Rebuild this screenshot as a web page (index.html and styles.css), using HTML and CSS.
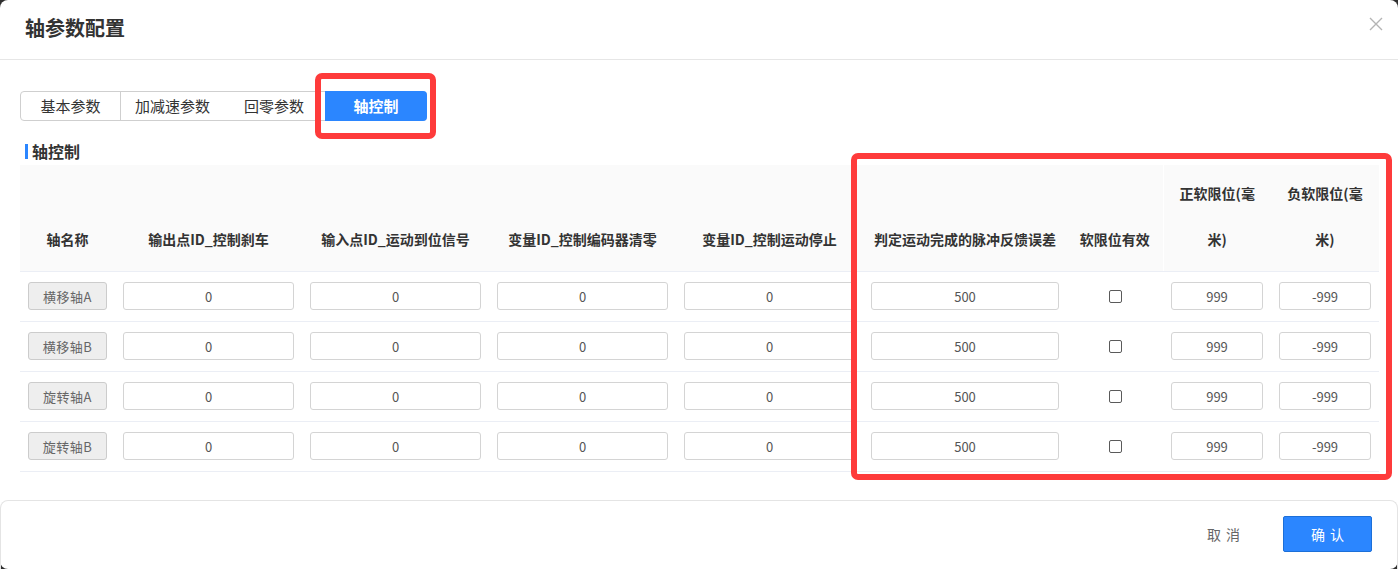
FILE: index.html
```html
<!DOCTYPE html>
<html lang="zh-CN">
<head>
    <meta charset="UTF-8">
    <title>轴参数配置</title>
    <link rel="stylesheet" href="styles.css">
</head>
<body>
    <div class="modal">
        <div class="modal-header">
            <h1 class="modal-title">轴参数配置</h1>
            <span class="modal-close">
                <svg width="14" height="14" viewBox="0 0 14 14"><path d="M1 1L13 13M13 1L1 13" stroke="#b4b4b4" stroke-width="1.4" fill="none"/></svg>
            </span>
        </div>

        <div class="modal-body">
            <div class="tabs">
                <div class="tab tab-first">基本参数</div>
                <div class="tab">加减速参数</div>
                <div class="tab">回零参数</div>
                <div class="tab active">轴控制</div>
            </div>

            <div class="section-title">轴控制</div>

            <table class="axis-table">
                <colgroup>
                    <col style="width:95px">
                    <col style="width:187px">
                    <col style="width:187px">
                    <col style="width:187px">
                    <col style="width:187px">
                    <col style="width:204px">
                    <col style="width:96px">
                    <col style="width:108px">
                    <col style="width:108px">
                </colgroup>
                <thead>
                    <tr>
                        <th>轴名称</th>
                        <th>输出点ID_控制刹车</th>
                        <th>输入点ID_运动到位信号</th>
                        <th>变量ID_控制编码器清零</th>
                        <th>变量ID_控制运动停止</th>
                        <th>判定运动完成的脉冲反馈误差</th>
                        <th>软限位有效</th>
                        <th class="th-split">正软限位(毫<br>米)</th>
                        <th>负软限位(毫<br>米)</th>
                    </tr>
                </thead>
                <tbody id="rows"></tbody>
            </table>
        </div>

        <div class="modal-footer">
            <button class="btn btn-cancel">取消</button>
            <button class="btn btn-primary">确认</button>
        </div>

        <!-- annotation boxes -->
        <div class="mark mark-tab"></div>
        <div class="mark mark-table"></div>
    </div>

    <script>
        const axes = ['横移轴A', '横移轴B', '旋转轴A', '旋转轴B'];
        const tbody = document.getElementById('rows');

        axes.forEach(name => {
            const tr = document.createElement('tr');
            tr.innerHTML = `
                <td><button class="axis-name">${name}</button></td>
                <td><input class="cell-input" value="0"></td>
                <td><input class="cell-input" value="0"></td>
                <td><input class="cell-input" value="0"></td>
                <td><input class="cell-input" value="0"></td>
                <td><input class="cell-input" value="500"></td>
                <td class="center"><input type="checkbox" class="check"></td>
                <td><input class="cell-input" value="999"></td>
                <td><input class="cell-input" value="-999"></td>`;
            tbody.appendChild(tr);
        });
    </script>
</body>
</html>
```

FILE: styles.css
```css
* {
    margin: 0;
    padding: 0;
    box-sizing: border-box;
}

html, body {
    height: 100%;
}

body {
    font-family: "Noto Sans CJK SC", "Noto Sans", sans-serif;
    background-color: #2f2f2f;
    color: #333;
    overflow: hidden;
}

.modal {
    position: relative;
    height: 569px;
    background-color: #fff;
    border-radius: 8px;
    display: flex;
    flex-direction: column;
}

.modal-header {
    height: 60px;
    border-bottom: 1px solid #e6e6e6;
    padding: 0 15px 0 25px;
    display: flex;
    align-items: center;
    justify-content: space-between;
}

.modal-title {
    font-size: 20px;
    font-weight: bold;
    color: #333;
    line-height: 24px;
    margin-top: -3px;
}

.modal-close {
    display: flex;
    margin-top: -12px;
}

.modal-body {
    flex: 1;
    padding: 31px 0 0 20px;
}

/* tabs */
.tabs {
    display: inline-flex;
    height: 30px;
    border: 1px solid #cfcfcf;
    border-radius: 4px;
}

.tab {
    min-width: 100px;
    padding: 0 14px;
    font-size: 15px;
    line-height: 28px;
    text-align: center;
    color: #333;
}

.tab-first {
    border-right: 1px solid #cfcfcf;
}

.tab.active {
    min-width: 102px;
    margin: -1px -1px -1px 1px;
    line-height: 30px;
    background-color: #2b86ff;
    color: #fff;
    font-weight: bold;
    border-radius: 0 4px 4px 0;
}

.section-title {
    margin-top: 23px;
    margin-left: 5px;
    padding-left: 4px;
    border-left: 3px solid #2b86ff;
    font-size: 16px;
    font-weight: bold;
    line-height: 15px;
    height: 15px;
    display: flex;
    align-items: center;
}

/* table */
.axis-table {
    margin-top: 6px;
    table-layout: fixed;
    border-collapse: collapse;
    width: 1359px;
}

.axis-table th {
    height: 106px;
    background-color: #fafafa;
    font-size: 14px;
    font-weight: bold;
    color: #333;
    line-height: 46px;
    vertical-align: bottom;
    padding: 0 8px 9px;
    text-align: center;
    border-bottom: 1px solid #ebeef5;
}

.axis-table th.th-split {
    border-left: 1px solid #fff;
}

.axis-table td {
    height: 50px;
    padding: 0 8px;
    border-bottom: 1px solid #ebeef5;
    vertical-align: middle;
}

.axis-table td.center {
    text-align: center;
}

.axis-name {
    width: 79px;
    height: 28px;
    background-color: #eeeeee;
    border: 1px solid #cccccc;
    border-radius: 3px;
    font-family: inherit;
    font-size: 13px;
    letter-spacing: 0.5px;
    color: #666;
    display: block;
}

.cell-input {
    display: block;
    width: 100%;
    height: 28px;
    border: 1px solid #d4d4d4;
    border-radius: 3px;
    text-align: center;
    font-family: inherit;
    font-size: 13px;
    color: #555;
    outline: none;
}

.check {
    appearance: none;
    -webkit-appearance: none;
    width: 13px;
    height: 13px;
    border: 1px solid #5a5a5a;
    border-radius: 2px;
    background: #fff;
    display: inline-block;
    vertical-align: middle;
    margin-top: -4px;
}

/* footer */
.modal-footer {
    height: 69px;
    border: 1px solid #e4e4e4;
    border-bottom: none;
    border-radius: 8px 8px 0 0;
    display: flex;
    align-items: center;
    justify-content: flex-end;
    gap: 15px;
    padding: 0 25px 2px 0;
}

.btn {
    width: 89px;
    height: 36px;
    font-family: inherit;
    font-size: 14px;
    letter-spacing: 5px;
    text-indent: 5px;
    border-radius: 2px;
    cursor: pointer;
}

.btn-cancel {
    background: none;
    border: none;
    color: #666;
}

.btn-primary {
    background-color: #2b86ff;
    border: 1px solid #1c6fd8;
    color: #fff;
}

/* red annotation boxes */
.mark {
    position: absolute;
    border: 6px solid #fe3b3b;
    border-radius: 7px;
    pointer-events: none;
}

.mark-tab {
    left: 315px;
    top: 73px;
    width: 121px;
    height: 66px;
}

.mark-table {
    left: 851px;
    top: 153px;
    width: 541px;
    height: 327px;
}
```
